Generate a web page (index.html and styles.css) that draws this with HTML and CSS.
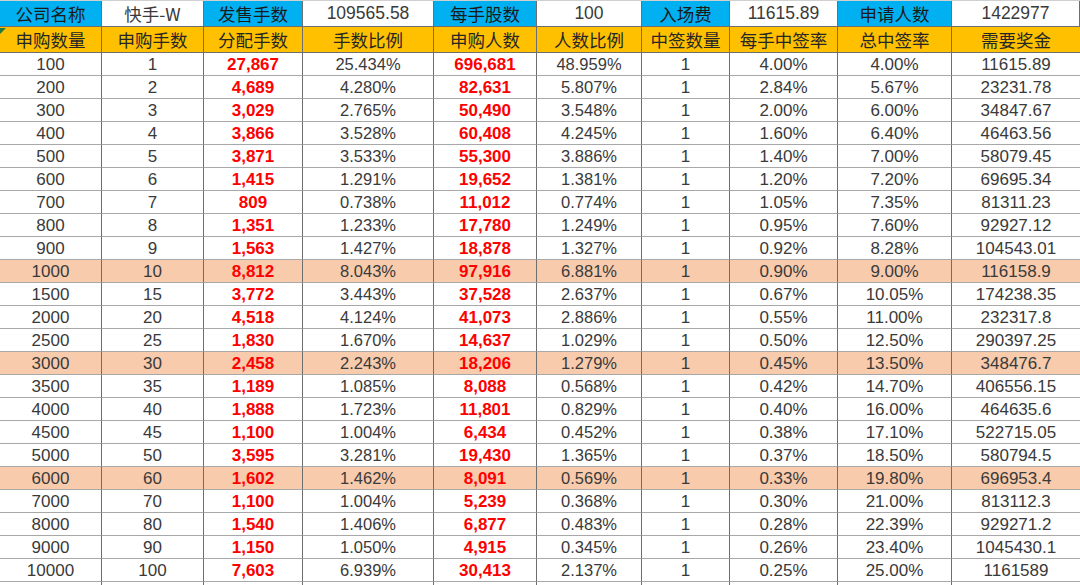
FILE: index.html
```html
<!DOCTYPE html>
<html lang="zh">
<head>
<meta charset="utf-8">
<title>快手-W 申购</title>
<link rel="stylesheet" href="styles.css">
</head>
<body>
<div class="sheet">
  <div class="row top">
    <div class="c blue">公司名称</div><div class="c cjk">快手-W</div>
    <div class="c blue">发售手数</div><div class="c">109565.58</div>
    <div class="c blue">每手股数</div><div class="c">100</div>
    <div class="c blue">入场费</div><div class="c">11615.89</div>
    <div class="c blue">申请人数</div><div class="c">1422977</div>
    <span class="flag"></span>
  </div>
  <div class="row head">
    <div class="c">申购数量</div><div class="c">申购手数</div><div class="c">分配手数</div><div class="c">手数比例</div><div class="c">申购人数</div><div class="c">人数比例</div><div class="c">中签数量</div><div class="c">每手中签率</div><div class="c">总中签率</div><div class="c">需要奖金</div>
  </div>
  <div class="row"><div class="c">100</div><div class="c">1</div><div class="c red">27,867</div><div class="c pct">25.434%</div><div class="c red">696,681</div><div class="c pct">48.959%</div><div class="c">1</div><div class="c">4.00%</div><div class="c">4.00%</div><div class="c">11615.89</div></div>
  <div class="row"><div class="c">200</div><div class="c">2</div><div class="c red">4,689</div><div class="c pct">4.280%</div><div class="c red">82,631</div><div class="c pct">5.807%</div><div class="c">1</div><div class="c">2.84%</div><div class="c">5.67%</div><div class="c">23231.78</div></div>
  <div class="row"><div class="c">300</div><div class="c">3</div><div class="c red">3,029</div><div class="c pct">2.765%</div><div class="c red">50,490</div><div class="c pct">3.548%</div><div class="c">1</div><div class="c">2.00%</div><div class="c">6.00%</div><div class="c">34847.67</div></div>
  <div class="row"><div class="c">400</div><div class="c">4</div><div class="c red">3,866</div><div class="c pct">3.528%</div><div class="c red">60,408</div><div class="c pct">4.245%</div><div class="c">1</div><div class="c">1.60%</div><div class="c">6.40%</div><div class="c">46463.56</div></div>
  <div class="row"><div class="c">500</div><div class="c">5</div><div class="c red">3,871</div><div class="c pct">3.533%</div><div class="c red">55,300</div><div class="c pct">3.886%</div><div class="c">1</div><div class="c">1.40%</div><div class="c">7.00%</div><div class="c">58079.45</div></div>
  <div class="row"><div class="c">600</div><div class="c">6</div><div class="c red">1,415</div><div class="c pct">1.291%</div><div class="c red">19,652</div><div class="c pct">1.381%</div><div class="c">1</div><div class="c">1.20%</div><div class="c">7.20%</div><div class="c">69695.34</div></div>
  <div class="row"><div class="c">700</div><div class="c">7</div><div class="c red">809</div><div class="c pct">0.738%</div><div class="c red">11,012</div><div class="c pct">0.774%</div><div class="c">1</div><div class="c">1.05%</div><div class="c">7.35%</div><div class="c">81311.23</div></div>
  <div class="row"><div class="c">800</div><div class="c">8</div><div class="c red">1,351</div><div class="c pct">1.233%</div><div class="c red">17,780</div><div class="c pct">1.249%</div><div class="c">1</div><div class="c">0.95%</div><div class="c">7.60%</div><div class="c">92927.12</div></div>
  <div class="row"><div class="c">900</div><div class="c">9</div><div class="c red">1,563</div><div class="c pct">1.427%</div><div class="c red">18,878</div><div class="c pct">1.327%</div><div class="c">1</div><div class="c">0.92%</div><div class="c">8.28%</div><div class="c">104543.01</div></div>
  <div class="row hl"><div class="c">1000</div><div class="c">10</div><div class="c red">8,812</div><div class="c pct">8.043%</div><div class="c red">97,916</div><div class="c pct">6.881%</div><div class="c">1</div><div class="c">0.90%</div><div class="c">9.00%</div><div class="c">116158.9</div></div>
  <div class="row"><div class="c">1500</div><div class="c">15</div><div class="c red">3,772</div><div class="c pct">3.443%</div><div class="c red">37,528</div><div class="c pct">2.637%</div><div class="c">1</div><div class="c">0.67%</div><div class="c">10.05%</div><div class="c">174238.35</div></div>
  <div class="row"><div class="c">2000</div><div class="c">20</div><div class="c red">4,518</div><div class="c pct">4.124%</div><div class="c red">41,073</div><div class="c pct">2.886%</div><div class="c">1</div><div class="c">0.55%</div><div class="c">11.00%</div><div class="c">232317.8</div></div>
  <div class="row"><div class="c">2500</div><div class="c">25</div><div class="c red">1,830</div><div class="c pct">1.670%</div><div class="c red">14,637</div><div class="c pct">1.029%</div><div class="c">1</div><div class="c">0.50%</div><div class="c">12.50%</div><div class="c">290397.25</div></div>
  <div class="row hl"><div class="c">3000</div><div class="c">30</div><div class="c red">2,458</div><div class="c pct">2.243%</div><div class="c red">18,206</div><div class="c pct">1.279%</div><div class="c">1</div><div class="c">0.45%</div><div class="c">13.50%</div><div class="c">348476.7</div></div>
  <div class="row"><div class="c">3500</div><div class="c">35</div><div class="c red">1,189</div><div class="c pct">1.085%</div><div class="c red">8,088</div><div class="c pct">0.568%</div><div class="c">1</div><div class="c">0.42%</div><div class="c">14.70%</div><div class="c">406556.15</div></div>
  <div class="row"><div class="c">4000</div><div class="c">40</div><div class="c red">1,888</div><div class="c pct">1.723%</div><div class="c red">11,801</div><div class="c pct">0.829%</div><div class="c">1</div><div class="c">0.40%</div><div class="c">16.00%</div><div class="c">464635.6</div></div>
  <div class="row"><div class="c">4500</div><div class="c">45</div><div class="c red">1,100</div><div class="c pct">1.004%</div><div class="c red">6,434</div><div class="c pct">0.452%</div><div class="c">1</div><div class="c">0.38%</div><div class="c">17.10%</div><div class="c">522715.05</div></div>
  <div class="row"><div class="c">5000</div><div class="c">50</div><div class="c red">3,595</div><div class="c pct">3.281%</div><div class="c red">19,430</div><div class="c pct">1.365%</div><div class="c">1</div><div class="c">0.37%</div><div class="c">18.50%</div><div class="c">580794.5</div></div>
  <div class="row hl"><div class="c">6000</div><div class="c">60</div><div class="c red">1,602</div><div class="c pct">1.462%</div><div class="c red">8,091</div><div class="c pct">0.569%</div><div class="c">1</div><div class="c">0.33%</div><div class="c">19.80%</div><div class="c">696953.4</div></div>
  <div class="row"><div class="c">7000</div><div class="c">70</div><div class="c red">1,100</div><div class="c pct">1.004%</div><div class="c red">5,239</div><div class="c pct">0.368%</div><div class="c">1</div><div class="c">0.30%</div><div class="c">21.00%</div><div class="c">813112.3</div></div>
  <div class="row"><div class="c">8000</div><div class="c">80</div><div class="c red">1,540</div><div class="c pct">1.406%</div><div class="c red">6,877</div><div class="c pct">0.483%</div><div class="c">1</div><div class="c">0.28%</div><div class="c">22.39%</div><div class="c">929271.2</div></div>
  <div class="row"><div class="c">9000</div><div class="c">90</div><div class="c red">1,150</div><div class="c pct">1.050%</div><div class="c red">4,915</div><div class="c pct">0.345%</div><div class="c">1</div><div class="c">0.26%</div><div class="c">23.40%</div><div class="c">1045430.1</div></div>
  <div class="row"><div class="c">10000</div><div class="c">100</div><div class="c red">7,603</div><div class="c pct">6.939%</div><div class="c red">30,413</div><div class="c pct">2.137%</div><div class="c">1</div><div class="c">0.25%</div><div class="c">25.00%</div><div class="c">1161589</div></div>
  <div class="row"><div class="c"></div><div class="c"></div><div class="c"></div><div class="c"></div><div class="c"></div><div class="c"></div><div class="c"></div><div class="c"></div><div class="c"></div><div class="c"></div></div>
</div>
</body>
</html>
```
FILE: styles.css
```css
html, body {
  margin: 0;
  padding: 0;
  background: #ffffff;
}
body {
  width: 1080px;
  height: 585px;
  overflow: hidden;
  font-family: "Liberation Sans", "Noto Sans CJK SC", sans-serif;
  color: #3a3a3a;
}
.sheet {
  display: flex;
  flex-direction: column;
}
.row {
  display: grid;
  grid-template-columns: 102px 102px 99px 131px 103px 105px 88px 108px 114px 128px;
  height: 23px;
  position: relative;
}
.c {
  box-sizing: border-box;
  border-right: 1px solid #6e6e6e;
  border-bottom: 1px solid #a8a8a8;
  display: flex;
  align-items: center;
  justify-content: center;
  font-size: 17px;
  line-height: 1;
  white-space: nowrap;
  padding-top: 1px;
}
.c:last-child {
  border-right: none;
}
.top {
  border-top: 1px solid #d0d0d0;
  box-sizing: border-box;
  height: 27px;
}
.top .c {
  font-size: 17.5px;
  border-bottom-color: #6e6e6e;
}
.cjk {
  font-family: "Noto Sans CJK SC", "Liberation Sans", sans-serif;
}
.blue {
  background: #00b0f0;
  color: #1a1a1a;
  font-family: "Noto Sans CJK SC", "Liberation Sans", sans-serif;
}
.head {
  height: 26px;
}
.head .c {
  background: #ffc000;
  font-family: "Noto Sans CJK SC", "Liberation Sans", sans-serif;
  font-size: 17.5px;
  color: #262626;
  border-bottom-color: #6e6e6e;
  padding-top: 0;
}
.hl .c {
  background: #f8cbad;
}
.red {
  color: #ff0000;
  font-weight: bold;
}
.pct {
  font-size: 16.5px;
}
.flag {
  position: absolute;
  left: 0;
  bottom: -7px;
  width: 0;
  height: 0;
  border-top: 6px solid #1e7a3c;
  border-right: 6px solid transparent;
  z-index: 2;
}
```
